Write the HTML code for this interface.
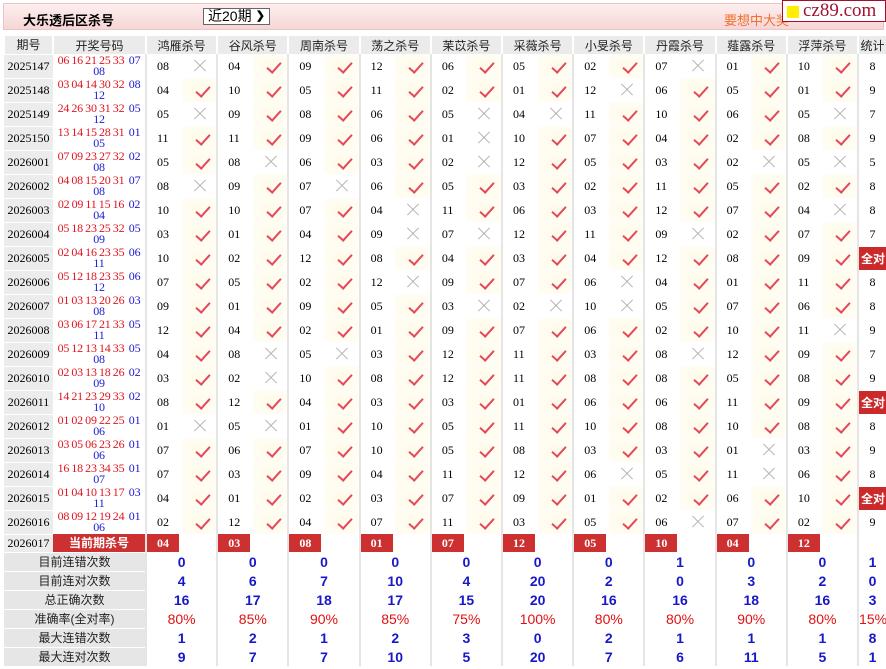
<!DOCTYPE html>
<html><head><meta charset="utf-8">
<style>
*{margin:0;padding:0;box-sizing:border-box}
body{width:886px;height:669px;background:#fff;position:relative;overflow:hidden;font-family:"Liberation Serif","Noto Serif CJK SC",serif;font-size:12px;color:#000}
.top{position:absolute;left:3px;top:3px;width:881px;height:27px;background:linear-gradient(#fdeeee,#f6d6d6);border:1px solid #ecc4c4}
.ttl{position:absolute;left:19px;top:6px;font:bold 13px "Liberation Sans","Noto Sans CJK SC",sans-serif}
.sel{position:absolute;left:199px;top:4px;width:67px;height:17px;border:1px solid #666;background:#fff;font:14px "Liberation Sans","Noto Sans CJK SC",sans-serif;padding-left:4px;line-height:15px}
.sel b{position:absolute;right:4px;top:0;font-size:11px}
.ad{position:absolute;left:720px;top:6px;color:#f07030;font:13px "Liberation Sans","Noto Sans CJK SC",sans-serif}
.logo{position:absolute;left:782px;top:0;width:104px;height:22px;background:#fff;border:1px solid #a0102a;color:#a01530;font:19px "Liberation Serif",serif;line-height:20px;padding-left:20px;white-space:nowrap;overflow:hidden}
.logo i{position:absolute;left:4px;top:5px;width:12px;height:12px;background:#ffee00}
table{position:absolute;left:3px;top:36px;border-collapse:collapse;table-layout:fixed;width:882px}
td{padding:0;text-align:center;vertical-align:middle;overflow:hidden;white-space:nowrap}
tr.h td{height:18px;background:#ebebeb;font-family:"Liberation Sans","Noto Sans CJK SC",sans-serif;font-size:12px;color:#222;border-left:2px solid #fff}
tr.d td{height:24px}
td.p{background:#ececec;border-top:1px solid #fff}
td.k{line-height:11px;font-size:12px;letter-spacing:-0.2px;word-spacing:-0.6px;padding:0}
td.k r{color:#e0141e}td.k u{color:#1a1ad0;text-decoration:none}
td.n{border-left:2px solid #e5e5e5;text-align:left;padding-left:10px}
td.v,td.x{background:radial-gradient(#fffbea,#fffdf6);position:relative}
td.v:after{content:"";position:absolute;left:17px;top:5px;width:6px;height:12px;border-right:2px solid #e34a5c;border-bottom:2px solid #e34a5c;transform:rotate(42deg)}
td.x:before,td.x:after{content:"";position:absolute;left:10px;top:11px;width:16px;height:1px;background:#b8b8b8;transform:rotate(45deg)}
td.x:after{transform:rotate(-45deg)}
td.x{background:#fff}
td.c{border-left:2px solid #e5e5e5;font-size:12px}
td.c b{display:inline-block;background:#cc2a2a;color:#fff;font:bold 12px "Liberation Sans","Noto Sans CJK SC",sans-serif;padding:3px 2px}
tr.kr td{height:18px}
tr.kr td.kb{border-left:2px solid #e5e5e5;text-align:left}
tr.kr td.kb b{display:inline-block;width:32px;height:18px;background:#cc3030;color:#fff;font:bold 12px "Liberation Serif",serif;line-height:18px;text-align:center;vertical-align:top}
tr.kr td.cur{background:#cc3030;color:#fff;font:bold 12px "Liberation Sans","Noto Sans CJK SC",sans-serif}
tr.s td{height:19px;line-height:16px;font:bold 14px/16px "Liberation Sans",sans-serif;color:#1818c8;border-left:2px solid #e5e5e5}
tr.s td.l{background:#e6e6e6;font:12px/16px "Liberation Sans","Noto Sans CJK SC",sans-serif;color:#222;border-top:1px solid #fff;border-left:none}
tr.s.pc td{color:#e01010;font-weight:normal}
tr.s.pc td.l{color:#222}
</style></head><body>
<div class="top"><div class="ttl">大乐透后区杀号</div><div class="sel">近20期<b>&#10095;</b></div><div class="ad">要想中大奖</div></div>
<div class="logo"><i></i>cz89.com</div>
<table>
<colgroup><col style="width:49px"><col style="width:93px"><col span="20" style="width:35.6px"><col style="width:28px"></colgroup>
<tr class="h"><td>期号</td><td>开奖号码</td><td colspan="2">鸿雁杀号</td><td colspan="2">谷风杀号</td><td colspan="2">周南杀号</td><td colspan="2">荡之杀号</td><td colspan="2">苿苡杀号</td><td colspan="2">采薇杀号</td><td colspan="2">小旻杀号</td><td colspan="2">丹霞杀号</td><td colspan="2">薤露杀号</td><td colspan="2">浮萍杀号</td><td>统计</td></tr>
<tr class="d"><td class="p">2025147</td><td class="k"><r>06 16 21 25 33</r>&nbsp; <u>07<br>08</u></td><td class="n">08</td><td class="x"></td><td class="n">04</td><td class="v"></td><td class="n">09</td><td class="v"></td><td class="n">12</td><td class="v"></td><td class="n">06</td><td class="v"></td><td class="n">05</td><td class="v"></td><td class="n">02</td><td class="v"></td><td class="n">07</td><td class="x"></td><td class="n">01</td><td class="v"></td><td class="n">10</td><td class="v"></td><td class="c">8</td></tr>
<tr class="d"><td class="p">2025148</td><td class="k"><r>03 04 14 30 32</r>&nbsp; <u>08<br>12</u></td><td class="n">04</td><td class="v"></td><td class="n">10</td><td class="v"></td><td class="n">05</td><td class="v"></td><td class="n">11</td><td class="v"></td><td class="n">02</td><td class="v"></td><td class="n">01</td><td class="v"></td><td class="n">12</td><td class="x"></td><td class="n">06</td><td class="v"></td><td class="n">05</td><td class="v"></td><td class="n">01</td><td class="v"></td><td class="c">9</td></tr>
<tr class="d"><td class="p">2025149</td><td class="k"><r>24 26 30 31 32</r>&nbsp; <u>05<br>12</u></td><td class="n">05</td><td class="x"></td><td class="n">09</td><td class="v"></td><td class="n">08</td><td class="v"></td><td class="n">06</td><td class="v"></td><td class="n">05</td><td class="x"></td><td class="n">04</td><td class="x"></td><td class="n">11</td><td class="v"></td><td class="n">10</td><td class="v"></td><td class="n">06</td><td class="v"></td><td class="n">05</td><td class="x"></td><td class="c">7</td></tr>
<tr class="d"><td class="p">2025150</td><td class="k"><r>13 14 15 28 31</r>&nbsp; <u>01<br>05</u></td><td class="n">11</td><td class="v"></td><td class="n">11</td><td class="v"></td><td class="n">09</td><td class="v"></td><td class="n">06</td><td class="v"></td><td class="n">01</td><td class="x"></td><td class="n">10</td><td class="v"></td><td class="n">07</td><td class="v"></td><td class="n">04</td><td class="v"></td><td class="n">02</td><td class="v"></td><td class="n">08</td><td class="v"></td><td class="c">9</td></tr>
<tr class="d"><td class="p">2026001</td><td class="k"><r>07 09 23 27 32</r>&nbsp; <u>02<br>08</u></td><td class="n">05</td><td class="v"></td><td class="n">08</td><td class="x"></td><td class="n">06</td><td class="v"></td><td class="n">03</td><td class="v"></td><td class="n">02</td><td class="x"></td><td class="n">12</td><td class="v"></td><td class="n">05</td><td class="v"></td><td class="n">03</td><td class="v"></td><td class="n">02</td><td class="x"></td><td class="n">05</td><td class="x"></td><td class="c">5</td></tr>
<tr class="d"><td class="p">2026002</td><td class="k"><r>04 08 15 20 31</r>&nbsp; <u>07<br>08</u></td><td class="n">08</td><td class="x"></td><td class="n">09</td><td class="v"></td><td class="n">07</td><td class="x"></td><td class="n">06</td><td class="v"></td><td class="n">05</td><td class="v"></td><td class="n">03</td><td class="v"></td><td class="n">02</td><td class="v"></td><td class="n">11</td><td class="v"></td><td class="n">05</td><td class="v"></td><td class="n">02</td><td class="v"></td><td class="c">8</td></tr>
<tr class="d"><td class="p">2026003</td><td class="k"><r>02 09 11 15 16</r>&nbsp; <u>02<br>04</u></td><td class="n">10</td><td class="v"></td><td class="n">10</td><td class="v"></td><td class="n">07</td><td class="v"></td><td class="n">04</td><td class="x"></td><td class="n">11</td><td class="v"></td><td class="n">06</td><td class="v"></td><td class="n">03</td><td class="v"></td><td class="n">12</td><td class="v"></td><td class="n">07</td><td class="v"></td><td class="n">04</td><td class="x"></td><td class="c">8</td></tr>
<tr class="d"><td class="p">2026004</td><td class="k"><r>05 18 23 25 32</r>&nbsp; <u>05<br>09</u></td><td class="n">03</td><td class="v"></td><td class="n">01</td><td class="v"></td><td class="n">04</td><td class="v"></td><td class="n">09</td><td class="x"></td><td class="n">07</td><td class="x"></td><td class="n">12</td><td class="v"></td><td class="n">11</td><td class="v"></td><td class="n">09</td><td class="x"></td><td class="n">02</td><td class="v"></td><td class="n">07</td><td class="v"></td><td class="c">7</td></tr>
<tr class="d"><td class="p">2026005</td><td class="k"><r>02 04 16 23 35</r>&nbsp; <u>06<br>11</u></td><td class="n">10</td><td class="v"></td><td class="n">02</td><td class="v"></td><td class="n">12</td><td class="v"></td><td class="n">08</td><td class="v"></td><td class="n">04</td><td class="v"></td><td class="n">03</td><td class="v"></td><td class="n">04</td><td class="v"></td><td class="n">12</td><td class="v"></td><td class="n">08</td><td class="v"></td><td class="n">09</td><td class="v"></td><td class="c"><b>全对</b></td></tr>
<tr class="d"><td class="p">2026006</td><td class="k"><r>05 12 18 23 35</r>&nbsp; <u>06<br>12</u></td><td class="n">07</td><td class="v"></td><td class="n">05</td><td class="v"></td><td class="n">02</td><td class="v"></td><td class="n">12</td><td class="x"></td><td class="n">09</td><td class="v"></td><td class="n">07</td><td class="v"></td><td class="n">06</td><td class="x"></td><td class="n">04</td><td class="v"></td><td class="n">01</td><td class="v"></td><td class="n">11</td><td class="v"></td><td class="c">8</td></tr>
<tr class="d"><td class="p">2026007</td><td class="k"><r>01 03 13 20 26</r>&nbsp; <u>03<br>08</u></td><td class="n">09</td><td class="v"></td><td class="n">01</td><td class="v"></td><td class="n">09</td><td class="v"></td><td class="n">05</td><td class="v"></td><td class="n">03</td><td class="x"></td><td class="n">02</td><td class="x"></td><td class="n">10</td><td class="x"></td><td class="n">05</td><td class="v"></td><td class="n">07</td><td class="v"></td><td class="n">06</td><td class="v"></td><td class="c">8</td></tr>
<tr class="d"><td class="p">2026008</td><td class="k"><r>03 06 17 21 33</r>&nbsp; <u>05<br>11</u></td><td class="n">12</td><td class="v"></td><td class="n">04</td><td class="v"></td><td class="n">02</td><td class="v"></td><td class="n">01</td><td class="v"></td><td class="n">09</td><td class="v"></td><td class="n">07</td><td class="v"></td><td class="n">06</td><td class="v"></td><td class="n">02</td><td class="v"></td><td class="n">10</td><td class="v"></td><td class="n">11</td><td class="x"></td><td class="c">9</td></tr>
<tr class="d"><td class="p">2026009</td><td class="k"><r>05 12 13 14 33</r>&nbsp; <u>05<br>08</u></td><td class="n">04</td><td class="v"></td><td class="n">08</td><td class="x"></td><td class="n">05</td><td class="x"></td><td class="n">03</td><td class="v"></td><td class="n">12</td><td class="v"></td><td class="n">11</td><td class="v"></td><td class="n">03</td><td class="v"></td><td class="n">08</td><td class="x"></td><td class="n">12</td><td class="v"></td><td class="n">09</td><td class="v"></td><td class="c">7</td></tr>
<tr class="d"><td class="p">2026010</td><td class="k"><r>02 03 13 18 26</r>&nbsp; <u>02<br>09</u></td><td class="n">03</td><td class="v"></td><td class="n">02</td><td class="x"></td><td class="n">10</td><td class="v"></td><td class="n">08</td><td class="v"></td><td class="n">12</td><td class="v"></td><td class="n">11</td><td class="v"></td><td class="n">08</td><td class="v"></td><td class="n">08</td><td class="v"></td><td class="n">05</td><td class="v"></td><td class="n">08</td><td class="v"></td><td class="c">9</td></tr>
<tr class="d"><td class="p">2026011</td><td class="k"><r>14 21 23 29 33</r>&nbsp; <u>02<br>10</u></td><td class="n">08</td><td class="v"></td><td class="n">12</td><td class="v"></td><td class="n">04</td><td class="v"></td><td class="n">03</td><td class="v"></td><td class="n">03</td><td class="v"></td><td class="n">01</td><td class="v"></td><td class="n">06</td><td class="v"></td><td class="n">06</td><td class="v"></td><td class="n">11</td><td class="v"></td><td class="n">09</td><td class="v"></td><td class="c"><b>全对</b></td></tr>
<tr class="d"><td class="p">2026012</td><td class="k"><r>01 02 09 22 25</r>&nbsp; <u>01<br>06</u></td><td class="n">01</td><td class="x"></td><td class="n">05</td><td class="x"></td><td class="n">01</td><td class="v"></td><td class="n">10</td><td class="v"></td><td class="n">05</td><td class="v"></td><td class="n">11</td><td class="v"></td><td class="n">10</td><td class="v"></td><td class="n">08</td><td class="v"></td><td class="n">10</td><td class="v"></td><td class="n">08</td><td class="v"></td><td class="c">8</td></tr>
<tr class="d"><td class="p">2026013</td><td class="k"><r>03 05 06 23 26</r>&nbsp; <u>01<br>06</u></td><td class="n">07</td><td class="v"></td><td class="n">06</td><td class="v"></td><td class="n">07</td><td class="v"></td><td class="n">10</td><td class="v"></td><td class="n">05</td><td class="v"></td><td class="n">08</td><td class="v"></td><td class="n">03</td><td class="v"></td><td class="n">03</td><td class="v"></td><td class="n">01</td><td class="x"></td><td class="n">03</td><td class="v"></td><td class="c">9</td></tr>
<tr class="d"><td class="p">2026014</td><td class="k"><r>16 18 23 34 35</r>&nbsp; <u>01<br>07</u></td><td class="n">07</td><td class="v"></td><td class="n">03</td><td class="v"></td><td class="n">09</td><td class="v"></td><td class="n">04</td><td class="v"></td><td class="n">11</td><td class="v"></td><td class="n">12</td><td class="v"></td><td class="n">06</td><td class="x"></td><td class="n">05</td><td class="v"></td><td class="n">11</td><td class="x"></td><td class="n">06</td><td class="v"></td><td class="c">8</td></tr>
<tr class="d"><td class="p">2026015</td><td class="k"><r>01 04 10 13 17</r>&nbsp; <u>03<br>11</u></td><td class="n">04</td><td class="v"></td><td class="n">01</td><td class="v"></td><td class="n">02</td><td class="v"></td><td class="n">03</td><td class="v"></td><td class="n">07</td><td class="v"></td><td class="n">09</td><td class="v"></td><td class="n">01</td><td class="v"></td><td class="n">02</td><td class="v"></td><td class="n">06</td><td class="v"></td><td class="n">10</td><td class="v"></td><td class="c"><b>全对</b></td></tr>
<tr class="d"><td class="p">2026016</td><td class="k"><r>08 09 12 19 24</r>&nbsp; <u>01<br>06</u></td><td class="n">02</td><td class="v"></td><td class="n">12</td><td class="v"></td><td class="n">04</td><td class="v"></td><td class="n">07</td><td class="v"></td><td class="n">11</td><td class="v"></td><td class="n">03</td><td class="v"></td><td class="n">05</td><td class="v"></td><td class="n">06</td><td class="x"></td><td class="n">07</td><td class="v"></td><td class="n">02</td><td class="v"></td><td class="c">9</td></tr>
<tr class="kr"><td class="p">2026017</td><td class="cur">当前期杀号</td><td class="kb" colspan="2"><b>04</b></td><td class="kb" colspan="2"><b>03</b></td><td class="kb" colspan="2"><b>08</b></td><td class="kb" colspan="2"><b>01</b></td><td class="kb" colspan="2"><b>07</b></td><td class="kb" colspan="2"><b>12</b></td><td class="kb" colspan="2"><b>05</b></td><td class="kb" colspan="2"><b>10</b></td><td class="kb" colspan="2"><b>04</b></td><td class="kb" colspan="2"><b>12</b></td><td class="c"></td></tr>
<tr class="s"><td class="l" colspan="2">目前连错次数</td><td colspan="2">0</td><td colspan="2">0</td><td colspan="2">0</td><td colspan="2">0</td><td colspan="2">0</td><td colspan="2">0</td><td colspan="2">0</td><td colspan="2">1</td><td colspan="2">0</td><td colspan="2">0</td><td>1</td></tr>
<tr class="s"><td class="l" colspan="2">目前连对次数</td><td colspan="2">4</td><td colspan="2">6</td><td colspan="2">7</td><td colspan="2">10</td><td colspan="2">4</td><td colspan="2">20</td><td colspan="2">2</td><td colspan="2">0</td><td colspan="2">3</td><td colspan="2">2</td><td>0</td></tr>
<tr class="s"><td class="l" colspan="2">总正确次数</td><td colspan="2">16</td><td colspan="2">17</td><td colspan="2">18</td><td colspan="2">17</td><td colspan="2">15</td><td colspan="2">20</td><td colspan="2">16</td><td colspan="2">16</td><td colspan="2">18</td><td colspan="2">16</td><td>3</td></tr>
<tr class="s pc"><td class="l" colspan="2">准确率(全对率)</td><td colspan="2">80%</td><td colspan="2">85%</td><td colspan="2">90%</td><td colspan="2">85%</td><td colspan="2">75%</td><td colspan="2">100%</td><td colspan="2">80%</td><td colspan="2">80%</td><td colspan="2">90%</td><td colspan="2">80%</td><td>15%</td></tr>
<tr class="s"><td class="l" colspan="2">最大连错次数</td><td colspan="2">1</td><td colspan="2">2</td><td colspan="2">1</td><td colspan="2">2</td><td colspan="2">3</td><td colspan="2">0</td><td colspan="2">2</td><td colspan="2">1</td><td colspan="2">1</td><td colspan="2">1</td><td>8</td></tr>
<tr class="s"><td class="l" colspan="2">最大连对次数</td><td colspan="2">9</td><td colspan="2">7</td><td colspan="2">7</td><td colspan="2">10</td><td colspan="2">5</td><td colspan="2">20</td><td colspan="2">7</td><td colspan="2">6</td><td colspan="2">11</td><td colspan="2">5</td><td>1</td></tr>
</table>
</body></html>
